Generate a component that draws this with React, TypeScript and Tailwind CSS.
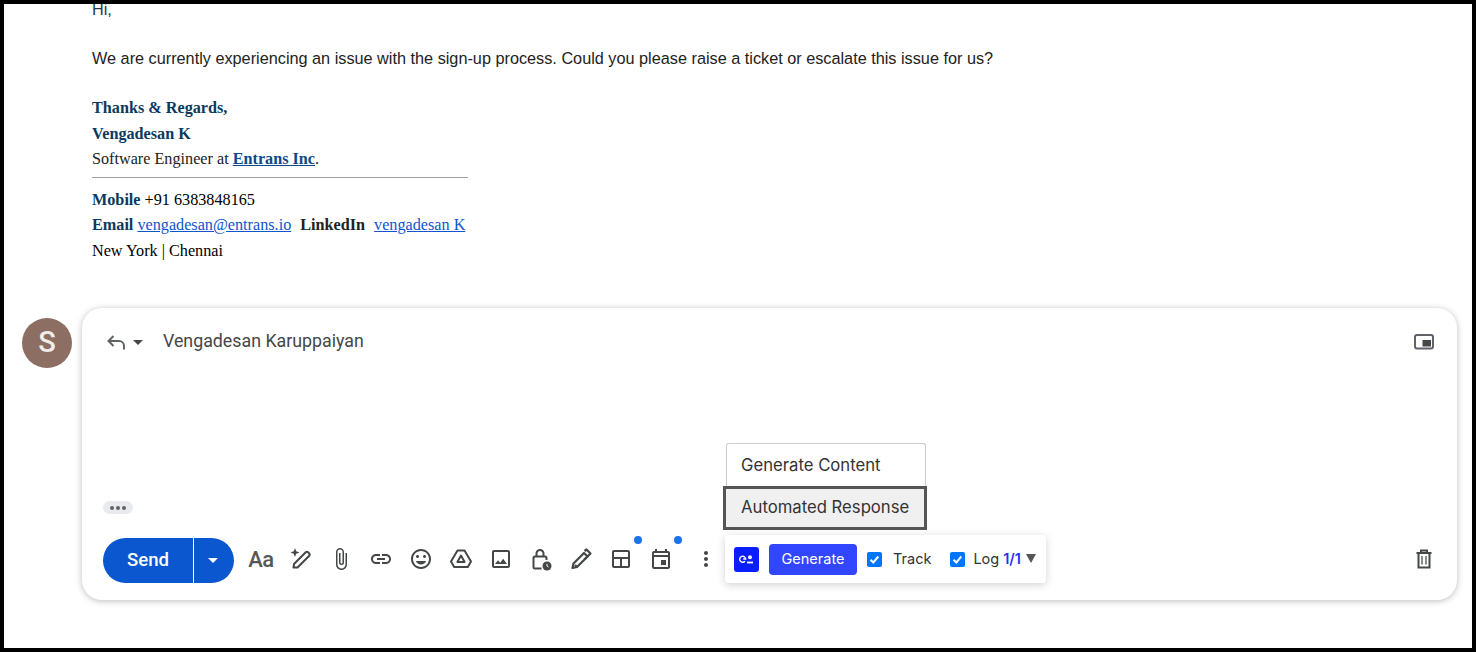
import {
  MdArrowDropDown,
  MdAttachFile,
  MdLink,
  MdMoreVert,
  MdOutlineEvent,
  MdOutlineInsertEmoticon,
  MdOutlineImage,
} from 'react-icons/md';

const roboto = { fontFamily: 'Roboto, sans-serif' };

function ToolSlot({ children, dot }: { children: React.ReactNode; dot?: boolean }) {
  return (
    <div className="relative flex h-10 w-10 items-center justify-center text-[#444746]">
      {children}
      {dot && <span className="absolute right-[-1px] top-[-3px] h-2 w-2 rounded-full bg-[#1a73e8]" />}
    </div>
  );
}

function ReplyArrow() {
  return (
    <svg width="24" height="24" viewBox="0 0 24 24" fill="none" stroke="#5f6368" strokeWidth="2">
      <path d="M9.500 6L4.500 11l5 5" />
      <path d="M4.500 11H15a5 5 0 0 1 5 5v3.500" />
    </svg>
  );
}

function SparkPen() {
  return (
    <svg width="26" height="26" viewBox="0 0 26 26" fill="none" stroke="currentColor" strokeWidth="2">
      <path d="M5.500 21.500l.5-3.500L17.500 6.500a2 2 0 0 1 2.800 0l.7.7a2 2 0 0 1 0 2.800L9.500 21.500z" strokeLinejoin="round" />
      <path d="M7 2l1.200 3.300 3.300 1.200-3.300 1.200L7 11 5.800 7.700 2.500 6.500l3.300-1.200z" fill="currentColor" stroke="none" />
    </svg>
  );
}

function DriveIcon() {
  return (
    <svg width="24" height="24" viewBox="0 0 24 24" fill="none" stroke="currentColor" strokeWidth="2" strokeLinejoin="round">
      <path d="M8.500 3.500h7L22 14.500l-3.200 5.500H5.200L2 14.500z" />
      <path d="M12 8.500l3.600 6.500H8.400z" />
    </svg>
  );
}

function LockClock() {
  return (
    <svg width="24" height="24" viewBox="0 0 24 24" fill="none" stroke="currentColor" strokeWidth="2">
      <path d="M12.500 21.500H6a1.500 1.500 0 0 1-1.500-1.500v-9A1.500 1.500 0 0 1 6 9.500h10a1.500 1.500 0 0 1 1.500 1.500v2" />
      <path d="M7.500 9.500V6.500a3.500 3.500 0 0 1 7 0v3" />
      <circle cx="18" cy="19" r="4.500" fill="currentColor" stroke="none" />
      <path d="M18 16.800V19l1.500 1" stroke="#fff" strokeWidth="1" />
    </svg>
  );
}

function SignPen() {
  return (
    <svg width="24" height="24" viewBox="0 0 24 24" fill="none" stroke="currentColor" strokeWidth="2.200" strokeLinejoin="round">
      <path d="M3.500 21l1-4.500L15 6l3.500 3.500L8 20z" />
      <path d="M15.500 4l2-1.500 4 4-6 6" />
      <path d="M6 18l2 2" />
    </svg>
  );
}

function LayoutIcon() {
  return (
    <svg width="24" height="24" viewBox="0 0 24 24" fill="none" stroke="currentColor" strokeWidth="2">
      <rect x="4" y="4" width="16" height="16" rx="1" />
      <path d="M4 11h16M12 11v9" />
    </svg>
  );
}

function PipIcon() {
  return (
    <svg width="22" height="22" viewBox="0 0 22 22" fill="none">
      <rect x="2" y="4" width="18" height="13.500" rx="2" stroke="#5f6368" strokeWidth="2" />
      <rect x="9.500" y="9" width="8.500" height="6.500" fill="#444746" />
    </svg>
  );
}

function TrashIcon() {
  return (
    <svg width="24" height="24" viewBox="0 0 24 24" fill="none" stroke="#444746" strokeWidth="2">
      <path d="M4.500 6h15M9 6V3.500h6V6" />
      <path d="M6.500 6v14.500h11V6" />
      <path d="M10 9v8.500M14 9v8.500" stroke="#8a8c8b" />
    </svg>
  );
}

function AppLogo() {
  return (
    <div className="flex h-[25px] w-[25px] items-center justify-center rounded-[3px] bg-[#0a1eff]">
      <svg width="15" height="10" viewBox="0 0 15 10" fill="none" stroke="#fff">
        <path d="M6 7.200a3 3 0 1 1 .7-2.200H4.200" strokeWidth="1.400" />
        <circle cx="11" cy="3.200" r="2" fill="#fff" stroke="none" />
        <path d="M8 8.500h6" strokeWidth="1.800" />
      </svg>
    </div>
  );
}

function Checkbox() {
  return (
    <span className="flex h-[15px] w-[15px] items-center justify-center rounded-[2px] bg-[#0075ff]">
      <svg width="11" height="11" viewBox="0 0 11 11" fill="none" stroke="#fff" strokeWidth="2">
        <path d="M1.500 5.800l2.800 2.700 5-6" />
      </svg>
    </span>
  );
}

export default function App() {
  return (
    <div className="h-[652px] w-[1476px] overflow-hidden border-4 border-black bg-white">
      {/* quoted message */}
      <div className="h-[304px] overflow-hidden pl-[88px]">
        <div className="mt-[-7px] text-[#222]" style={{ fontFamily: '"Liberation Sans", Arial, sans-serif' }}>
          <p className="h-[49px] text-[16.250px] leading-[24px] text-[#1f3a4d]">Hi,</p>
          <p className="h-[50px] text-[16.250px] leading-[24px]">
            We are currently experiencing an issue with the sign-up process. Could you please raise a ticket or escalate this issue for us?
          </p>
        </div>
        <div className="text-[16.200px] leading-[25.500px] text-black" style={{ fontFamily: '"Liberation Serif", "Times New Roman", serif' }}>
          <p className="font-bold text-[#0b3a5e]">Thanks &amp; Regards,</p>
          <p className="font-bold text-[#0b3a5e]">Vengadesan K</p>
          <p className="text-[#222]">
            Software Engineer at <a className="font-bold text-[#0b4a8a] underline">Entrans Inc</a>.
          </p>
          <div className="mb-[10px] mt-[4px] h-px w-[376px] bg-[#a0a0a0]" />
          <p>
            <b className="text-[#0b3a5e]">Mobile</b> +91 6383848165
          </p>
          <p>
            <b className="text-[#0b3a5e]">Email</b> <a className="text-[#1155cc] underline">vengadesan@entrans.io</a>
            <b className="ml-[9px] text-[#222]">LinkedIn</b> <a className="ml-[5px] text-[#1155cc] underline">vengadesan K</a>
          </p>
          <p>New York | Chennai</p>
        </div>
      </div>

      {/* reply row */}
      <div className="flex items-start pl-[18px]">
        <div
          className="mt-[10px] flex h-[50px] w-[50px] items-center justify-center rounded-full bg-[#8d6e63] text-[29px] font-medium text-[#f1ece9]"
          style={roboto}
        >
          S
        </div>

        <div
          className="relative ml-[10px] flex h-[292px] w-[1375px] flex-col rounded-[20px] bg-white shadow-[0_1px_6px_rgba(60,64,67,0.35)]"
          style={roboto}
        >
          <div className="flex h-[66px] items-center pl-[22px] pr-[22px] pt-[1px]">
            <ReplyArrow />
            <MdArrowDropDown size={24} className="ml-[-2px] text-[#444746]" />
            <span className="ml-[13px] text-[17.800px] text-[#444746]">Vengadesan Karuppaiyan</span>
            <div className="ml-auto">
              <PipIcon />
            </div>
          </div>

          <div className="flex-1" />

          <div className="mb-[21px] ml-[21px] flex h-[13px] w-[30px] items-center justify-center gap-[2px] rounded-full bg-[#e8eaed]">
            <span className="h-[4px] w-[4px] rounded-full bg-[#5f6368]" />
            <span className="h-[4px] w-[4px] rounded-full bg-[#5f6368]" />
            <span className="h-[4px] w-[4px] rounded-full bg-[#5f6368]" />
          </div>

          <div className="mb-[17px] flex h-[48px] items-center pl-[21px]">
            <div className="mt-[2px] flex h-[45px] w-[131px] overflow-hidden rounded-full bg-[#0b57d0] text-white">
              <div className="flex w-[90px] items-center justify-center pt-[2px] text-[18.500px] font-medium">Send</div>
              <div className="w-px bg-white" />
              <div className="flex flex-1 items-center justify-center">
                <MdArrowDropDown size={24} className="ml-[-2px]" />
              </div>
            </div>

            <div className="ml-[7px] flex items-center">
              <ToolSlot>
                <span className="text-[22px] font-medium tracking-[-0.5px] text-[#555756]">Aa</span>
              </ToolSlot>
              <ToolSlot>
                <SparkPen />
              </ToolSlot>
              <ToolSlot>
                <MdAttachFile size={24} />
              </ToolSlot>
              <ToolSlot>
                <MdLink size={24} />
              </ToolSlot>
              <ToolSlot>
                <MdOutlineInsertEmoticon size={24} />
              </ToolSlot>
              <ToolSlot>
                <DriveIcon />
              </ToolSlot>
              <ToolSlot>
                <MdOutlineImage size={24} />
              </ToolSlot>
              <ToolSlot>
                <LockClock />
              </ToolSlot>
              <ToolSlot>
                <SignPen />
              </ToolSlot>
              <ToolSlot dot>
                <LayoutIcon />
              </ToolSlot>
              <ToolSlot dot>
                <MdOutlineEvent size={24} />
              </ToolSlot>
              <div className="ml-[5px] flex h-10 w-10 items-center justify-center text-[#444746]">
                <MdMoreVert size={24} />
              </div>
            </div>

            {/* extension bar */}
            <div
              className="relative ml-[-1px] flex h-[48px] w-[321px] items-center rounded-[4px] bg-white pl-[9px] text-[14.500px] text-[#333] shadow-[0_2px_8px_rgba(0,0,0,0.18)]"
              style={{ fontFamily: 'Inter, sans-serif' }}
            >
              <AppLogo />
              <button className="ml-[10px] h-[31px] w-[88px] rounded-[4px] bg-[#3346ff] text-[14.500px] text-white">Generate</button>
              <span className="ml-[10px]">
                <Checkbox />
              </span>
              <span className="ml-[11px]">Track</span>
              <span className="ml-[19px]">
                <Checkbox />
              </span>
              <span className="ml-[8px]">Log</span>
              <span className="ml-[4px] font-semibold text-[#2d2df0]">1/1</span>
              <span className="mb-[2px] ml-[5px] h-0 w-0 border-x-[5px] border-t-[9px] border-x-transparent border-t-[#555]" />

              {/* popup menu */}
              <div className="absolute bottom-[53px] left-[-2px] w-[204px] text-[16.700px] text-[#333]">
                <div className="mx-[3px] flex h-[43px] w-[200px] items-center rounded-t-[3px] border border-b-0 border-[#ccc] bg-white pl-[14px] pt-[2px]">
                  Generate Content
                </div>
                <div className="flex h-[44px] items-center border-[3px] border-[#555] bg-[#f0f0f0] pl-[15px]">Automated Response</div>
              </div>
            </div>

            <div className="ml-auto mr-[21px]">
              <TrashIcon />
            </div>
          </div>
        </div>
      </div>
    </div>
  );
}
